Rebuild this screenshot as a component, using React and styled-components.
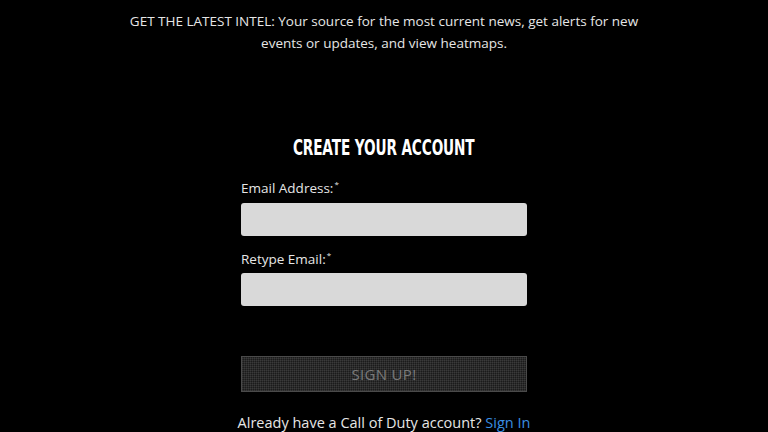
import React from "react";
import styled, { createGlobalStyle } from "styled-components";

const GlobalStyle = createGlobalStyle`
  html, body {
    margin: 0;
    padding: 0;
    background: #000;
  }
  body {
    font-family: "Open Sans", "DejaVu Sans", sans-serif;
    color: #e8e8e8;
  }
`;

const Page = styled.div`
  width: 768px;
  height: 432px;
  overflow: hidden;
  background: #000;
  display: flex;
  flex-direction: column;
  align-items: center;
`;

const Intro = styled.p`
  margin: 10px 0 0;
  max-width: 530px;
  text-align: center;
  font-size: 13.5px;
  line-height: 22px;
  color: #e6e6e6;
`;

const Title = styled.h2`
  margin: 82px 0 0;
  font-family: "DejaVu Sans", sans-serif;
  font-weight: 700;
  font-size: 21px;
  line-height: 24px;
  letter-spacing: -0.2px;
  color: #fff;
  transform: scaleX(0.65);
`;

const Form = styled.form`
  width: 286px;
  margin-top: 16px;
  display: flex;
  flex-direction: column;
`;

const Label = styled.label`
  font-size: 13.5px;
  line-height: 16px;
  color: #e6e6e6;
  margin-bottom: 7px;

  sup {
    font-size: 8px;
    margin-left: 1px;
  }
`;

const Input = styled.input`
  box-sizing: border-box;
  height: 33px;
  width: 100%;
  border: none;
  border-radius: 3px;
  background: #d9d9d9;
  margin-bottom: ${(p) => p.$gap}px;
`;

const Button = styled.button`
  box-sizing: border-box;
  height: 36px;
  width: 100%;
  border: 1px solid #4a4a4a;
  background-color: #1b1b1b;
  background-image:
    repeating-linear-gradient(0deg, rgba(255,255,255,0.07) 0 1px, transparent 1px 2px),
    repeating-linear-gradient(90deg, rgba(255,255,255,0.07) 0 1px, transparent 1px 2px);
  color: #7a7a7a;
  font-family: "Open Sans", "DejaVu Sans", sans-serif;
  font-size: 15px;
  letter-spacing: 0.3px;
`;

const Footer = styled.p`
  margin: 22px 0 0;
  font-size: 14.5px;
  line-height: 18px;
  color: #e6e6e6;
`;

const SignIn = styled.a`
  color: #3a8ee0;
  text-decoration: none;
`;

export default function App() {
  return (
    <>
      <GlobalStyle />
      <Page>
        <Intro>
          GET THE LATEST INTEL: Your source for the most current news, get alerts for new events or updates, and view heatmaps.
        </Intro>
        <Title>CREATE YOUR ACCOUNT</Title>
        <Form onSubmit={(e) => e.preventDefault()}>
          <Label>
            Email Address:<sup>*</sup>
          </Label>
          <Input type="email" $gap={11} />
          <Label>
            Retype Email:<sup>*</sup>
          </Label>
          <Input type="email" $gap={50} />
          <Button type="submit">SIGN UP!</Button>
        </Form>
        <Footer>
          Already have a Call of Duty account? <SignIn href="#">Sign In</SignIn>
        </Footer>
      </Page>
    </>
  );
}
